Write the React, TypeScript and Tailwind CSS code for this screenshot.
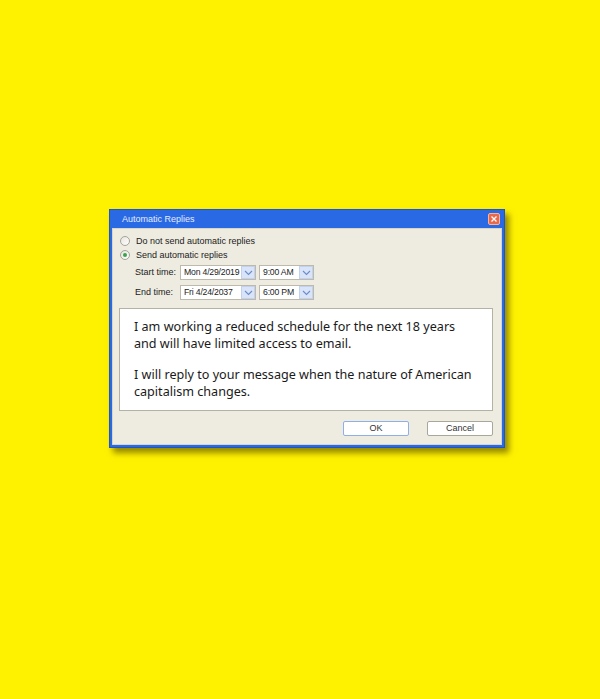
import React from "react";

const ui = { fontFamily: '"Liberation Sans", Arial, sans-serif' };
const big = { fontFamily: '"Noto Sans", "Open Sans", sans-serif' };

function Chevron() {
  return (
    <svg width="9" height="6" viewBox="0 0 9 6" fill="none">
      <path d="M1 1 L4.5 4.5 L8 1" stroke="#6a8ccc" strokeWidth="1.1" />
    </svg>
  );
}

function Combo({ value, width }: { value: string; width: string }) {
  return (
    <div className={`flex shrink-0 items-center h-[15px] border border-[#bdbaad] bg-white ${width}`}>
      <span className="flex-1 pl-[3px] text-[8.7px] tracking-[-0.2px] text-[#222] leading-none whitespace-nowrap">{value}</span>
      <div className="w-[14px] h-[13px] shrink-0 bg-[#d9e4f8] border border-[#c2d1ec] flex items-center justify-center">
        <Chevron />
      </div>
    </div>
  );
}

function Radio({ checked }: { checked?: boolean }) {
  return (
    <div className="w-[10px] h-[10px] rounded-full border border-[#a5a39a] bg-gradient-to-br from-[#e6e4dc] to-white flex items-center justify-center">
      {checked && <div className="w-[4px] h-[4px] rounded-full bg-[#3ba34a]" />}
    </div>
  );
}

export default function App() {
  return (
    <div className="w-[600px] h-[699px] bg-[#fff200] pt-[209px] pl-[109px]" style={ui}>
      <div className="w-[396px] h-[239px] bg-[#2a69e4] border border-[#1f55c8] flex flex-col px-[2px] pb-[2px] shadow-[4px_5px_6px_rgba(90,80,0,0.65)]">
        <div className="h-[18px] flex items-center justify-between pl-[10px] pr-[2px]">
          <span className="text-[9px] text-[#e4ecff] leading-none">Automatic Replies</span>
          <div className="w-[12px] h-[12px] rounded-[2px] bg-[#e8694b] border border-[#f4b49f] flex items-center justify-center">
            <svg width="8" height="8" viewBox="0 0 8 8">
              <path d="M1.5 1.5 L6.5 6.5 M6.5 1.5 L1.5 6.5" stroke="#fff" strokeWidth="1.3" />
            </svg>
          </div>
        </div>
        <div className="flex-1 bg-[#eeebe0] border border-[#d8d4c6] flex flex-col pl-[6px] pr-[8px]">
          <div className="flex items-center gap-[6px] mt-[7px] h-[10px] pl-[1px]">
            <Radio />
            <span className="text-[9px] text-[#222] leading-none">Do not send automatic replies</span>
          </div>
          <div className="flex items-center gap-[6px] mt-[4px] h-[10px] pl-[1px]">
            <Radio checked />
            <span className="text-[9px] text-[#222] leading-none">Send automatic replies</span>
          </div>
          <div className="flex items-center mt-[5px] pl-[16px]">
            <span className="w-[45px] text-[9px] text-[#222] leading-none">Start time:</span>
            <Combo value="Mon 4/29/2019" width="w-[76px]" />
            <div className="w-[3px]" />
            <Combo value="9:00 AM" width="w-[55px]" />
          </div>
          <div className="flex items-center mt-[5px] pl-[16px]">
            <span className="w-[45px] text-[9px] text-[#222] leading-none">End time:</span>
            <Combo value="Fri 4/24/2037" width="w-[76px]" />
            <div className="w-[3px]" />
            <Combo value="6:00 PM" width="w-[55px]" />
          </div>
          <div className="mt-[8px] h-[103px] bg-white border border-[#b4b1a5] pl-[14px] pt-[9px] text-[12.6px] leading-[17px] text-[#1a1a1a]" style={big}>
            <p>I am working a reduced schedule for the next 18 years<br />and will have limited access to email.</p>
            <p className="mt-[14px]">I will reply to your message when the nature of American<br />capitalism changes.</p>
          </div>
          <div className="flex justify-end gap-[18px] mt-[10px]">
            <div className="w-[66px] h-[15px] bg-white border border-[#8fb0e6] rounded-[2px] flex items-center justify-center text-[9px] text-[#333] leading-none">OK</div>
            <div className="w-[66px] h-[15px] bg-white border border-[#a9a69a] rounded-[2px] flex items-center justify-center text-[9px] text-[#333] leading-none">Cancel</div>
          </div>
        </div>
      </div>
    </div>
  );
}
